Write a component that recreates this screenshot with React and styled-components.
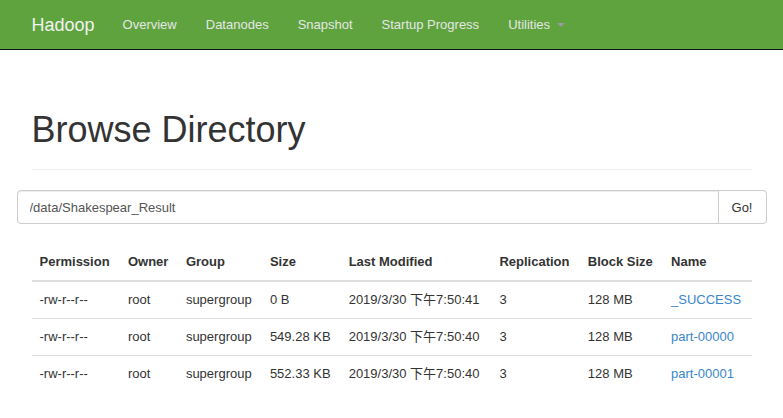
import React from 'react'
import styled, { createGlobalStyle } from 'styled-components'

const GlobalStyle = createGlobalStyle`
  * { box-sizing: border-box; }
  body {
    margin: 0;
    background: #fff;
    color: #333;
    font-family: "Liberation Sans", Arial, "Noto Sans CJK SC", sans-serif;
    font-size: 13px;
    line-height: 20px;
  }
`

const Navbar = styled.nav`
  height: 50px;
  background-color: #5fa33e;
  border-bottom: 1px solid #111;
`

const NavContainer = styled.div`
  width: 750px;
  margin: 0 auto;
  padding: 0 15px;
  display: flex;
  align-items: center;
  height: 49px;
`

const Brand = styled.a`
  font-size: 18px;
  color: #f2f2f2;
  padding-right: 14px;
  text-decoration: none;
`

const NavLink = styled.a`
  padding: 0 15px 0 14px;
  font-size: 13px;
  color: #e6e6e6;
  text-decoration: none;
  display: flex;
  align-items: center;
`

const Caret = styled.span`
  display: inline-block;
  margin-left: 7px;
  border-top: 4px solid #9a9a9a;
  border-left: 4px solid transparent;
  border-right: 4px solid transparent;
`

const Container = styled.div`
  width: 750px;
  margin: 0 auto;
  padding: 20px 15px 0;
`

const PageHeader = styled.div`
  margin: 40px 0 20px;
  padding-bottom: 9px;
  border-bottom: 1px solid #eee;
`

const Title = styled.h1`
  margin: 20px 0 10px;
  font-size: 36px;
  font-weight: 400;
  line-height: 40px;
  color: #333;
`

const InputGroup = styled.div`
  display: flex;
  margin: 0 -15px 20px;
  height: 34px;
`

const PathInput = styled.input`
  flex: 1;
  height: 34px;
  padding: 6px 12px;
  font-family: inherit;
  font-size: 13px;
  color: #555;
  border: 1px solid #ccc;
  border-radius: 4px 0 0 4px;
  box-shadow: inset 0 1px 1px rgba(0, 0, 0, 0.075);
`

const GoButton = styled.button`
  width: 49px;
  height: 34px;
  margin-left: -1px;
  font-family: inherit;
  font-size: 13px;
  color: #333;
  background: #fff;
  border: 1px solid #ccc;
  border-radius: 0 4px 4px 0;
`

const Table = styled.table`
  width: 100%;
  border-collapse: collapse;
`

const Th = styled.th`
  text-align: left;
  padding: 8px 8px;
  font-weight: 700;
  border-bottom: 2px solid #ddd;
  white-space: nowrap;
`

const Td = styled.td`
  padding: 8px 8px;
  border-top: 1px solid #ddd;
  white-space: nowrap;
`

const FirstTd = styled(Td)`
  border-top: 0;
`

const FileLink = styled.a`
  color: #3a87c8;
  text-decoration: none;
`

const columns = ['Permission', 'Owner', 'Group', 'Size', 'Last Modified', 'Replication', 'Block Size', 'Name']

const files = [
  { size: '0 B', modified: '2019/3/30 下午7:50:41', name: '_SUCCESS' },
  { size: '549.28 KB', modified: '2019/3/30 下午7:50:40', name: 'part-00000' },
  { size: '552.33 KB', modified: '2019/3/30 下午7:50:40', name: 'part-00001' },
]

const App = () => (
  <>
    <GlobalStyle />
    <Navbar>
      <NavContainer>
        <Brand href="#">Hadoop</Brand>
        <NavLink href="#">Overview</NavLink>
        <NavLink href="#">Datanodes</NavLink>
        <NavLink href="#">Snapshot</NavLink>
        <NavLink href="#">Startup Progress</NavLink>
        <NavLink href="#">
          Utilities <Caret />
        </NavLink>
      </NavContainer>
    </Navbar>
    <Container>
      <PageHeader>
        <Title>Browse Directory</Title>
      </PageHeader>
      <InputGroup>
        <PathInput defaultValue="/data/Shakespear_Result" />
        <GoButton>Go!</GoButton>
      </InputGroup>
      <Table>
        <thead>
          <tr>
            {columns.map(c => (
              <Th key={c}>{c}</Th>
            ))}
          </tr>
        </thead>
        <tbody>
          {files.map((f, i) => {
            const Cell = i === 0 ? FirstTd : Td
            return (
              <tr key={f.name}>
                <Cell>-rw-r--r--</Cell>
                <Cell>root</Cell>
                <Cell>supergroup</Cell>
                <Cell>{f.size}</Cell>
                <Cell>{f.modified}</Cell>
                <Cell>3</Cell>
                <Cell>128 MB</Cell>
                <Cell>
                  <FileLink href="#">{f.name}</FileLink>
                </Cell>
              </tr>
            )
          })}
        </tbody>
      </Table>
    </Container>
  </>
)

export default App
